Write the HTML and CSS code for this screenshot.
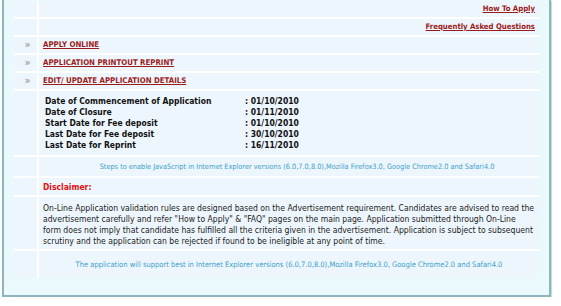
FILE: index.html
```html
<!DOCTYPE html>
<html>
<head>
<meta charset="utf-8">
<link rel="stylesheet" href="styles.css">
</head>
<body>
<div class="frame">
  <table class="main">
    <tr class="row-s">
      <td class="bullet"></td>
      <td class="right"><a href="#" class="toplink">How To Apply</a></td>
    </tr>
    <tr class="row-s">
      <td class="bullet"></td>
      <td class="right"><a href="#" class="toplink">Frequently Asked Questions</a></td>
    </tr>
    <tr class="row-s">
      <td class="bullet">&raquo;</td>
      <td><a href="#" class="caplink">APPLY ONLINE</a></td>
    </tr>
    <tr class="row-s">
      <td class="bullet">&raquo;</td>
      <td><a href="#" class="caplink">APPLICATION PRINTOUT REPRINT</a></td>
    </tr>
    <tr class="row-s">
      <td class="bullet">&raquo;</td>
      <td><a href="#" class="caplink">EDIT/ UPDATE APPLICATION DETAILS</a></td>
    </tr>
    <tr class="row-dates">
      <td class="bullet"></td>
      <td>
        <div class="dates">
          <span>Date of Commencement of Application</span><span>: 01/10/2010</span>
          <span>Date of Closure</span><span>: 01/11/2010</span>
          <span>Start Date for Fee deposit</span><span>: 01/10/2010</span>
          <span>Last Date for Fee deposit</span><span>: 30/10/2010</span>
          <span>Last Date for Reprint</span><span>: 16/11/2010</span>
        </div>
      </td>
    </tr>
    <tr class="row-steps">
      <td class="bullet"></td>
      <td class="center note steps">Steps to enable JavaScript in Internet Explorer versions (6.0,7.0,8.0),Mozilla Firefox3.0, Google Chrome2.0 and Safari4.0</td>
    </tr>
    <tr class="row-disc">
      <td class="bullet"></td>
      <td class="disclaimer">Disclaimer:</td>
    </tr>
    <tr class="row-para">
      <td class="bullet"></td>
      <td class="para">On-Line Application validation rules are designed based on the Advertisement requirement. Candidates are advised to read the advertisement carefully and refer "How to Apply" &amp; "FAQ" pages on the main page. Application submitted through On-Line form does not imply that candidate has fulfilled all the criteria given in the advertisement. Application is subject to subsequent scrutiny and the application can be rejected if found to be ineligible at any point of time.</td>
    </tr>
    <tr class="row-last">
      <td class="bullet"></td>
      <td class="center note support">The application will support best in Internet Explorer versions (6.0,7.0,8.0),Mozilla Firefox3.0, Google Chrome2.0 and Safari4.0</td>
    </tr>
  </table>
</div>
</body>
</html>
```
FILE: styles.css
```css
html, body {
  margin: 0;
  padding: 0;
  background: #ffffff;
}
body {
  font-family: Tahoma, "DejaVu Sans Condensed", "DejaVu Sans", sans-serif;
  font-size: 8px;
  line-height: 10px;
  color: #1a1a1a;
}
.frame {
  margin-left: 2px;
  width: 525px;
  padding: 1px 10px 17px 10px;
  border: 2px solid #8db5bd;
  border-top: none;
  background: #e9f9fc;
  box-shadow: 1px 1px 1px #c9dde0;
}
.main {
  width: 525px;
  border-collapse: collapse;
  border-style: hidden;
  table-layout: fixed;
}
.main td {
  background: #eef6fd;
  border: 2px solid #ffffff;
  padding: 0 0 0 4px;
  vertical-align: middle;
}
.main td.bullet {
  width: 19px;
  padding: 0 0 0 4px;
  text-align: center;
  color: #8a8a8a;
  font-size: 11px;
}
.row-s td { height: 16px; }
.row-disc td { height: 17px; }
.row-dates td { height: 64px; }
.row-steps td { height: 19px; }
.row-para td { height: 52px; }
.row-last td { height: 27px; }
.right {
  text-align: right;
}
.main td.right { padding-right: 4px; }
.toplink {
  color: #9b1b1b;
  font-weight: bold;
  font-size: 7.7px;
  text-decoration: underline;
}
.caplink {
  color: #9b1b1b;
  font-weight: bold;
  font-size: 7.8px;
  text-decoration: underline;
}
.dates {
  display: grid;
  grid-template-columns: 200px auto;
  padding-left: 2px;
  font-weight: bold;
  font-size: 8.5px;
  line-height: 11px;
  color: #111;
}
.center { text-align: center; }
.main td.center { padding: 0; }
.note {
  color: #3b9fca;
}
.main td.steps { font-size: 7.3px; padding-left: 16px; }
.support { font-size: 7.5px; padding-top: 2px; }
.disclaimer {
  color: #e01010;
  font-weight: bold;
  font-size: 8.5px;
}
.para {
  font-size: 8.55px;
  line-height: 11px;
  color: #1a1a1a;
}
.main td.para { padding: 4px 4px 0 4px; }
.row-para td.para { height: 48px; }
```
